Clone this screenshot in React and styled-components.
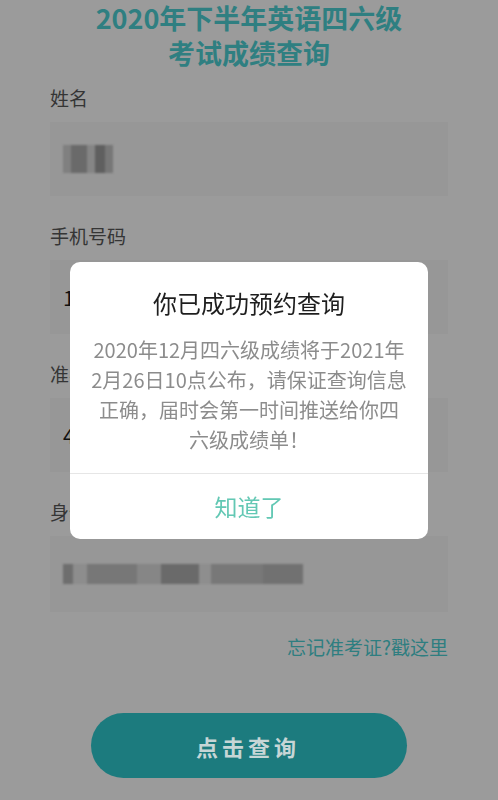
import React from 'react';
import styled, { createGlobalStyle } from 'styled-components';

const GlobalStyle = createGlobalStyle`
    html, body {
        margin: 0;
        padding: 0;
        background: #9b9b9b;
        font-family: "Noto Sans CJK SC", "Noto Sans", sans-serif;
    }
`;

const PAGE = styled.div`
    min-height: 800px;
    padding: 0 50px;
    box-sizing: border-box;
    background: #9b9b9b;
    overflow: hidden;
`;

const H_TITLE = styled.h1`
    margin: 0;
    color: #2f7f81;
    font-size: 27px;
    font-weight: 600;
    line-height: 35px;
    text-align: center;
`;

const FORM = styled.div`
    display: flex;
    flex-direction: column;
    gap: 28px;
    margin-top: 16px;
`;

const FIELD = styled.div`
    display: flex;
    flex-direction: column;
    gap: 12px;
`;

const LABEL = styled.div`
    color: #353535;
    font-size: 19px;
    line-height: 24px;
`;

const INPUT_BOX = styled.div`
    height: ${p => p.h || 74}px;
    background: #979797;
    display: flex;
    align-items: center;
    padding-left: 13px;
    color: #111;
    font-size: 21px;
`;

const MOSAIC = styled.div`
    display: flex;
    align-items: stretch;
    height: ${p => p.h}px;
    filter: blur(1.2px);
`;

const TILE = styled.span`
    display: block;
    width: ${p => p.w}px;
    background: ${p => p.c};
`;

const LINK_ROW = styled.div`
    margin-top: 23px;
    text-align: right;
    color: #2e7e80;
    font-size: 19px;
    line-height: 24px;
`;

const BUTTON_ROW = styled.div`
    display: flex;
    justify-content: center;
    margin-top: 54px;
`;

const SUBMIT = styled.button`
    width: 316px;
    height: 65px;
    border: none;
    border-radius: 33px;
    background: #1c7b7e;
    color: #c6d6d6;
    font-family: inherit;
    font-size: 22px;
    font-weight: 600;
    letter-spacing: 4px;
    padding-left: 4px;
`;

const BACKDROP = styled.div`
    position: fixed;
    inset: 0;
    display: flex;
    align-items: center;
    justify-content: center;
`;

const DIALOG = styled.div`
    width: 358px;
    height: 277px;
    background: #fff;
    border-radius: 10px;
    display: flex;
    flex-direction: column;
    overflow: hidden;
`;

const DIALOG_TITLE = styled.div`
    margin-top: 25px;
    text-align: center;
    color: #1e1e1e;
    font-size: 24px;
    line-height: 32px;
`;

const DIALOG_BODY = styled.div`
    margin-top: 16px;
    text-align: center;
    color: #8c8c8c;
    font-size: 20px;
    line-height: 30px;
    flex: 1;
`;

const LINE = styled.span`
    display: block;
    white-space: nowrap;
`;

const DIALOG_BUTTON = styled.div`
    height: 65px;
    border-top: 1px solid #e6e6e6;
    display: flex;
    align-items: center;
    justify-content: center;
    color: #63c8b4;
    font-size: 23px;
`;

const nameTiles = [
    { w: 8, c: '#808080' }, { w: 16, c: '#6a6a6a' }, { w: 8, c: '#858585' },
    { w: 10, c: '#5f5f5f' }, { w: 8, c: '#777777' }
];

const idTiles = [
    { w: 10, c: '#6e6e6e' }, { w: 14, c: '#8d8d8d' }, { w: 50, c: '#777777' },
    { w: 24, c: '#868686' }, { w: 38, c: '#6a6a6a' }, { w: 12, c: '#8e8e8e' },
    { w: 52, c: '#787878' }, { w: 40, c: '#717171' }
];

const App = () => {
    return (
        <>
            <GlobalStyle />
            <PAGE>
                <H_TITLE>2020年下半年英语四六级<br />考试成绩查询</H_TITLE>

                <FORM>
                    <FIELD>
                        <LABEL>姓名</LABEL>
                        <INPUT_BOX>
                            <MOSAIC h={28}>
                                {nameTiles.map((t, i) => <TILE key={i} w={t.w} c={t.c} />)}
                            </MOSAIC>
                        </INPUT_BOX>
                    </FIELD>
                    <FIELD>
                        <LABEL>手机号码</LABEL>
                        <INPUT_BOX>1</INPUT_BOX>
                    </FIELD>
                    <FIELD>
                        <LABEL>准考证号</LABEL>
                        <INPUT_BOX>4</INPUT_BOX>
                    </FIELD>
                    <FIELD>
                        <LABEL>身份证号</LABEL>
                        <INPUT_BOX h={76}>
                            <MOSAIC h={20}>
                                {idTiles.map((t, i) => <TILE key={i} w={t.w} c={t.c} />)}
                            </MOSAIC>
                        </INPUT_BOX>
                    </FIELD>
                </FORM>

                <LINK_ROW>忘记准考证?戳这里</LINK_ROW>

                <BUTTON_ROW>
                    <SUBMIT>点击查询</SUBMIT>
                </BUTTON_ROW>
            </PAGE>

            <BACKDROP>
                <DIALOG>
                    <DIALOG_TITLE>你已成功预约查询</DIALOG_TITLE>
                    <DIALOG_BODY>
                        <LINE>2020年12月四六级成绩将于2021年</LINE>
                        <LINE>2月26日10点公布，请保证查询信息</LINE>
                        <LINE>正确，届时会第一时间推送给你四</LINE>
                        <LINE>六级成绩单！</LINE>
                    </DIALOG_BODY>
                    <DIALOG_BUTTON>知道了</DIALOG_BUTTON>
                </DIALOG>
            </BACKDROP>
        </>
    );
};

export default App;
